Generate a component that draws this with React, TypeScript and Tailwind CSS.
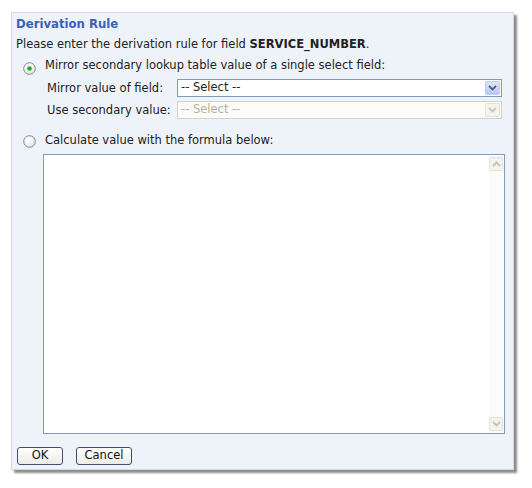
import React, { useState } from 'react';

const font = { fontFamily: '"DejaVu Sans", Verdana, sans-serif' };

const Radio: React.FC<{ checked: boolean; onClick: () => void }> = ({ checked, onClick }) => (
  <button onClick={onClick} className="w-[13px] h-[13px] shrink-0">
    <svg width="13" height="13" viewBox="0 0 13 13">
      <defs>
        <radialGradient id="rg" cx="0.35" cy="0.35" r="0.8">
          <stop offset="0" stopColor="#ffffff" />
          <stop offset="1" stopColor="#e2e2dc" />
        </radialGradient>
      </defs>
      <circle cx="6.5" cy="6.5" r="5.8" fill="url(#rg)" stroke="#7b8a96" strokeWidth="1" />
      {checked && <circle cx="6.5" cy="6.5" r="2.3" fill="#2fa32f" />}
    </svg>
  </button>
);

const Chevron: React.FC<{ up?: boolean; color: string }> = ({ up, color }) => (
  <svg width="9" height="6" viewBox="0 0 9 6">
    <path
      d={up ? 'M1 5 L4.5 1.5 L8 5' : 'M1 1 L4.5 4.5 L8 1'}
      fill="none"
      stroke={color}
      strokeWidth="1.8"
    />
  </svg>
);

const Select: React.FC<{ disabled?: boolean }> = ({ disabled }) => (
  <div
    className={`flex-1 h-[18px] -mt-[2px] flex items-center border ${
      disabled ? 'border-[#d4d2c6] bg-[#fbfbf7] text-[#b3b1a6]' : 'border-[#7f9db9] bg-white text-[#222]'
    }`}
  >
    <span className="flex-1 pl-[3px] leading-none">-- Select --</span>
    <div
      className={`w-[15px] h-[14px] mr-px flex items-center justify-center rounded-[2px] ${
        disabled ? 'bg-[#f4f3ee] border border-[#e4e2d8]' : 'bg-gradient-to-b from-[#dbe6fd] to-[#b6c9f5] border border-[#b9cbf3]'
      }`}
    >
      <Chevron color={disabled ? '#c9c7bc' : '#4d6185'} />
    </div>
  </div>
);

export default function App() {
  const [mode, setMode] = useState<'mirror' | 'formula'>('mirror');

  return (
    <div className="w-[532px] h-[488px] bg-white pt-[12px] pl-[11px]" style={font}>
      <div className="w-[503px] h-[458px] bg-[#eef3fa] border border-[#d3d9e2] shadow-[3px_3px_2px_rgba(0,0,0,0.45)] flex flex-col pt-px pl-[4px] text-[11.5px] text-[#222]">
        <div className="h-[21px] flex items-center font-bold text-[#3a62b3] text-[11.7px]">Derivation Rule</div>
        <div className="h-[19px] flex items-center">
          Please enter the derivation rule for field&nbsp;<b>SERVICE_NUMBER</b>.
        </div>
        <div className="mt-[4px] h-[20px] flex items-center pl-[7px] gap-[9px]">
          <Radio checked={mode === 'mirror'} onClick={() => setMode('mirror')} />
          <span className="-mt-[4px]">Mirror secondary lookup table value of a single select field:</span>
        </div>
        <div className="h-[22px] flex items-center pl-[31px] pr-[11px]">
          <span className="w-[130px]">Mirror value of field:</span>
          <Select />
        </div>
        <div className="h-[22px] flex items-center pl-[31px] pr-[11px]">
          <span className="w-[130px]">Use secondary value:</span>
          <Select disabled />
        </div>
        <div className="mt-[9px] h-[20px] flex items-center pl-[7px] gap-[9px]">
          <Radio checked={mode === 'formula'} onClick={() => setMode('formula')} />
          <span>Calculate value with the formula below:</span>
        </div>
        <div className="mt-[3px] ml-[27px] w-[462px] h-[280px] border border-[#7f9db9] bg-white flex justify-end">
          <div className="w-[15px] h-full py-[2px] pr-[1px] flex flex-col justify-between bg-[#fbfbf9]">
            <div className="h-[14px] w-[14px] rounded-[2px] bg-[#f3f2ec] border border-[#e6e4da] flex items-center justify-center">
              <Chevron up color="#c4c2b6" />
            </div>
            <div className="h-[14px] w-[14px] rounded-[2px] bg-[#f3f2ec] border border-[#e6e4da] flex items-center justify-center">
              <Chevron color="#c4c2b6" />
            </div>
          </div>
        </div>
        <div className="mt-[13px] flex items-center gap-[13px] pl-[1px]">
          <button className="w-[46px] h-[18px] border border-[#3f5068] rounded-[3px] bg-gradient-to-b from-white to-[#ecebe6] leading-none text-[#111]">
            OK
          </button>
          <button className="w-[56px] h-[18px] border border-[#3f5068] rounded-[3px] bg-gradient-to-b from-white to-[#ecebe6] leading-none text-[#111]">
            Cancel
          </button>
        </div>
      </div>
    </div>
  );
}
